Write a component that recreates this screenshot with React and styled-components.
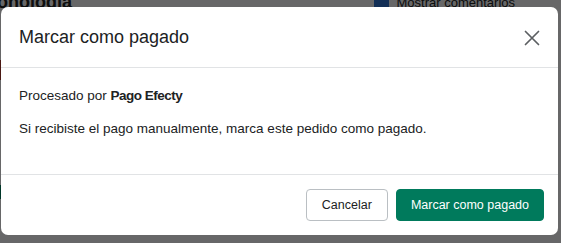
import React from "react";
import styled, { createGlobalStyle } from "styled-components";

const GlobalStyle = createGlobalStyle`
  html, body {
    margin: 0;
    padding: 0;
    background: #ffffff;
    font-family: "Liberation Sans", Arial, sans-serif;
  }
`;

function App() {
  return (
    <>
      <GlobalStyle />
      <Page>
        <BackgroundBar>
          <PageTitle>Cronología</PageTitle>
          <CommentToggle>
            <CheckBox />
            Mostrar comentarios
          </CommentToggle>
        </BackgroundBar>
        <BackgroundAccent $color="#b03a2e" $top={60} $height={20} />
        <BackgroundAccent $color="#008060" $top={185} $height={14} />

        <Overlay>
          <Modal role="dialog" aria-labelledby="modal-title">
            <ModalHeader>
              <ModalTitle id="modal-title">Marcar como pagado</ModalTitle>
              <CloseButton aria-label="Cerrar">
                <svg width="16" height="16" viewBox="0 0 16 16" fill="none">
                  <path
                    d="M1.5 1.5L14.5 14.5M14.5 1.5L1.5 14.5"
                    stroke="#5c5f62"
                    strokeWidth="1.7"
                    strokeLinecap="round"
                  />
                </svg>
              </CloseButton>
            </ModalHeader>
            <ModalBody>
              <BodyText>
                Procesado por <strong>Pago Efecty</strong>
              </BodyText>
              <BodyText>
                Si recibiste el pago manualmente, marca este pedido como pagado.
              </BodyText>
            </ModalBody>
            <ModalFooter>
              <Button>Cancelar</Button>
              <Button $primary>Marcar como pagado</Button>
            </ModalFooter>
          </Modal>
        </Overlay>
      </Page>
    </>
  );
}

const Page = styled.div`
  position: relative;
  width: 561px;
  height: 243px;
  overflow: hidden;
  background: #f6f6f7;
`;

const BackgroundBar = styled.div`
  display: flex;
  justify-content: space-between;
  align-items: center;
  height: 14px;
  margin-top: -5px;
  padding: 0 46px 0 0;
`;

const PageTitle = styled.div`
  margin-left: -23px;
  font-size: 18px;
  font-weight: bold;
  color: #202223;
`;

const CommentToggle = styled.div`
  display: flex;
  align-items: center;
  gap: 8px;
  font-size: 13px;
  color: #202223;
`;

const CheckBox = styled.span`
  width: 15px;
  height: 15px;
  border-radius: 3px;
  background: #2c6ecb;
`;

const BackgroundAccent = styled.div`
  position: absolute;
  left: 0;
  top: ${p => p.$top}px;
  width: 4px;
  height: ${p => p.$height}px;
  background: ${p => p.$color};
`;

const Overlay = styled.div`
  position: absolute;
  inset: 0;
  background: rgba(0, 0, 0, 0.58);
  padding: 7px 0 0 1px;
`;

const Modal = styled.div`
  width: 557px;
  height: 228px;
  display: flex;
  flex-direction: column;
  background: #ffffff;
  border-radius: 7px;
  overflow: hidden;
`;

const ModalHeader = styled.div`
  display: flex;
  align-items: center;
  justify-content: space-between;
  height: 61px;
  box-sizing: border-box;
  padding: 0 18px 0 18px;
  border-bottom: 1px solid #e1e3e5;
`;

const ModalTitle = styled.h2`
  margin: 0;
  font-size: 18px;
  font-weight: normal;
  color: #202223;
`;

const CloseButton = styled.button`
  display: flex;
  align-items: center;
  justify-content: center;
  width: 16px;
  height: 16px;
  padding: 0;
  margin-top: 2px;
  border: none;
  background: transparent;
  cursor: pointer;
`;

const ModalBody = styled.div`
  flex: 1;
  display: flex;
  flex-direction: column;
  gap: 17px;
  padding: 20px 18px 0;
  border-bottom: 1px solid #e1e3e5;
`;

const BodyText = styled.p`
  margin: 0;
  font-size: 13.5px;
  line-height: 16px;
  color: #202223;

  strong {
    font-weight: bold;
    letter-spacing: -0.5px;
  }
`;

const ModalFooter = styled.div`
  display: flex;
  justify-content: flex-end;
  align-items: center;
  gap: 8px;
  height: 60px;
  box-sizing: border-box;
  padding: 0 14px 0 18px;
`;

const Button = styled.button`
  height: 32px;
  padding: 0 ${p => (p.$primary ? 14 : 15)}px;
  border-radius: 4px;
  font-family: "Liberation Sans", Arial, sans-serif;
  font-size: 12.5px;
  cursor: pointer;
  color: ${p => (p.$primary ? "#ffffff" : "#202223")};
  background: ${p => (p.$primary ? "#007a5c" : "#ffffff")};
  border: 1px solid ${p => (p.$primary ? "#007a5c" : "#babfc3")};
`;

export default App;
